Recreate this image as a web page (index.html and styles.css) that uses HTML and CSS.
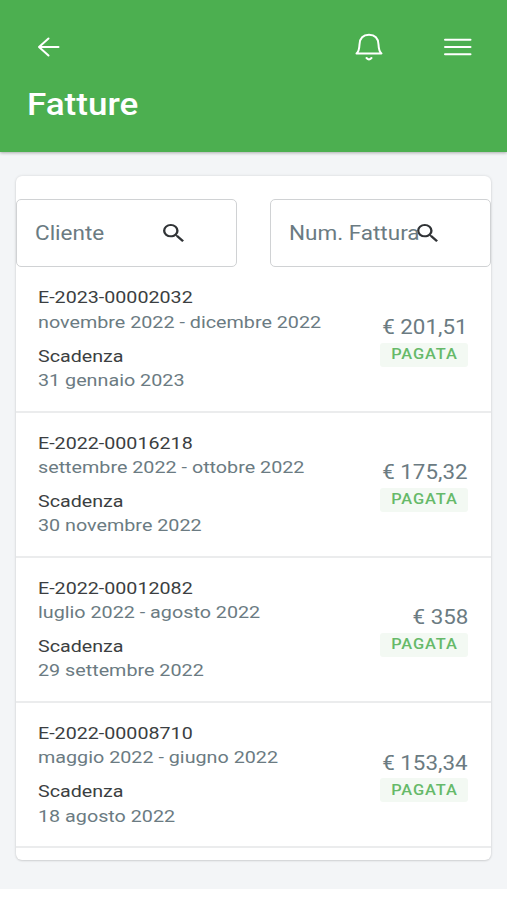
FILE: index.html
```html
<!DOCTYPE html>
<html lang="it">
<head>
<meta charset="utf-8">
<title>Fatture</title>
<link rel="stylesheet" href="styles.css">
</head>
<body>
<header class="header">
  <nav class="bar">
    <svg class="back" width="24" height="22" viewBox="0 0 24 22"><path d="M22.5 11H3M12.500 2.500L3 11L12.500 19.500"/></svg>
    <svg class="bell" width="30" height="30" viewBox="0 0 30 30"><path d="M2.500 21.500C5 19.500 5.300 17 5.500 12.500C5.800 6.500 9 2.800 15 2.800S24.200 6.500 24.500 12.500C24.700 17 25 19.500 27.500 21.500Z"/><path d="M12.500 26Q15 28.800 17.500 26"/></svg>
    <svg class="menu" width="28" height="20" viewBox="0 0 28 20"><path d="M1 2.700H26.500M1 10H26.500M1 17.200H26.500"/></svg>
  </nav>
  <h1 class="title">Fatture</h1>
</header>
<main class="page">
  <section class="card">
    <div class="filters">
      <label class="field"><span class="hint">Cliente</span><svg class="search" width="21" height="18" viewBox="3 3 17.500 17.500" preserveAspectRatio="none"><path d="M15.500 14h-.79l-.28-.27A6.470 6.470 0 0 0 16 9.500 6.500 6.500 0 1 0 9.500 16c1.610 0 3.090-.59 4.230-1.570l.27.28v.79l5 4.990L20.490 19zm-6 0C7.010 14 5 11.990 5 9.500S7.010 5 9.500 5 14 7.010 14 9.500 11.990 14 9.500 14z"/></svg></label>
      <label class="field"><span class="hint">Num. Fattura</span><svg class="search" width="21" height="18" viewBox="3 3 17.500 17.500" preserveAspectRatio="none"><path d="M15.500 14h-.79l-.28-.27A6.470 6.470 0 0 0 16 9.500 6.500 6.500 0 1 0 9.500 16c1.610 0 3.090-.59 4.230-1.570l.27.28v.79l5 4.990L20.490 19zm-6 0C7.010 14 5 11.990 5 9.500S7.010 5 9.500 5 14 7.010 14 9.500 11.990 14 9.500 14z"/></svg></label>
    </div>
    <article class="row">
      <div class="info"><p class="strong">E-2023-00002032</p><p>novembre 2022 - dicembre 2022</p><p class="strong due">Scadenza</p><p>31 gennaio 2023</p></div>
      <div class="side"><span class="amount">€ 201,51</span><span class="badge"><span class="status">PAGATA</span></span></div>
    </article>
    <article class="row">
      <div class="info"><p class="strong">E-2022-00016218</p><p>settembre 2022 - ottobre 2022</p><p class="strong due">Scadenza</p><p>30 novembre 2022</p></div>
      <div class="side"><span class="amount">€ 175,32</span><span class="badge"><span class="status">PAGATA</span></span></div>
    </article>
    <article class="row">
      <div class="info"><p class="strong">E-2022-00012082</p><p>luglio 2022 - agosto 2022</p><p class="strong due">Scadenza</p><p>29 settembre 2022</p></div>
      <div class="side"><span class="amount">€ 358</span><span class="badge"><span class="status">PAGATA</span></span></div>
    </article>
    <article class="row">
      <div class="info"><p class="strong">E-2022-00008710</p><p>maggio 2022 - giugno 2022</p><p class="strong due">Scadenza</p><p>18 agosto 2022</p></div>
      <div class="side"><span class="amount">€ 153,34</span><span class="badge"><span class="status">PAGATA</span></span></div>
    </article>
  </section>
</main>
</body>
</html>
```
FILE: styles.css
```css
* { box-sizing: border-box; }
body {
  margin: 0;
  height: 900px;
  overflow: hidden;
  background: #fff;
  color: #6b7b82;
  font-family: Roboto, "Liberation Sans", sans-serif;
}
p, h1 { margin: 0; }
.header {
  position: relative;
  height: 152px;
  padding: 32px 35px 0 27px;
  background: #4caf50;
  box-shadow: 0 1px 3px rgba(0, 0, 0, .3);
}
.bar { display: flex; align-items: center; height: 30px; }
.bar svg { fill: none; stroke: #fff; stroke-width: 2; stroke-linecap: round; stroke-linejoin: round; }
.back { margin-left: 9px; }
.bell { margin-left: auto; }
.menu { margin-left: 60px; }
.title {
  width: max-content;
  margin-top: 24.5px;
  color: #fff;
  font-size: 31px;
  font-weight: 500;
  line-height: 36px;
  transform: scaleX(1.13);
  transform-origin: left;
}
.page { height: 737px; padding: 23.5px 16px 0; background: #f3f5f7; }
.card {
  height: 684.5px;
  padding-top: 23.5px;
  background: #fff;
  border-radius: 6px;
  box-shadow: 0 0 3px rgba(0, 0, 0, .12), 0 1px 2px rgba(0, 0, 0, .1);
}
.filters { display: flex; justify-content: space-between; margin-bottom: .6px; }
.field {
  display: flex;
  align-items: center;
  width: 221px;
  height: 68px;
  padding-left: 18px;
  border: 1.5px solid #d0d2d4;
  border-radius: 5px;
}
.hint {
  width: 127.500px;
  font-size: 20px;
  white-space: nowrap;
  transform: scaleX(1.125);
  transform-origin: left;
}
.search { fill: #303336; }
.row {
  display: flex;
  justify-content: space-between;
  height: 145.2px;
  padding: 17.900px 23px 0 22px;
  border-bottom: 2px solid #ebeced;
}
.info p {
  width: max-content;
  font-size: 17.3px;
  line-height: 24.3px;
  transform: scaleX(1.142);
  transform-origin: left;
}
.info .strong { color: #3b3e41; transform: scaleX(1.138); }
.info .due { margin-top: 9.700px; }
.side { display: flex; flex-direction: column; align-items: flex-end; padding-top: 29.500px; }
.amount {
  font-size: 19.800px;
  line-height: 26px;
  white-space: nowrap;
  transform: scaleX(1.13);
  transform-origin: right;
}
.badge {
  display: flex;
  align-items: center;
  justify-content: center;
  width: 88px;
  height: 24px;
  margin-top: 1.600px;
  background: #f3f9f3;
  border-radius: 3px;
}
.status {
  color: #66b969;
  font-size: 14.500px;
  font-weight: 500;
  line-height: 18px;
  padding-top: 1px;
  letter-spacing: .8px;
  transform: scaleX(1.13);
}
```
